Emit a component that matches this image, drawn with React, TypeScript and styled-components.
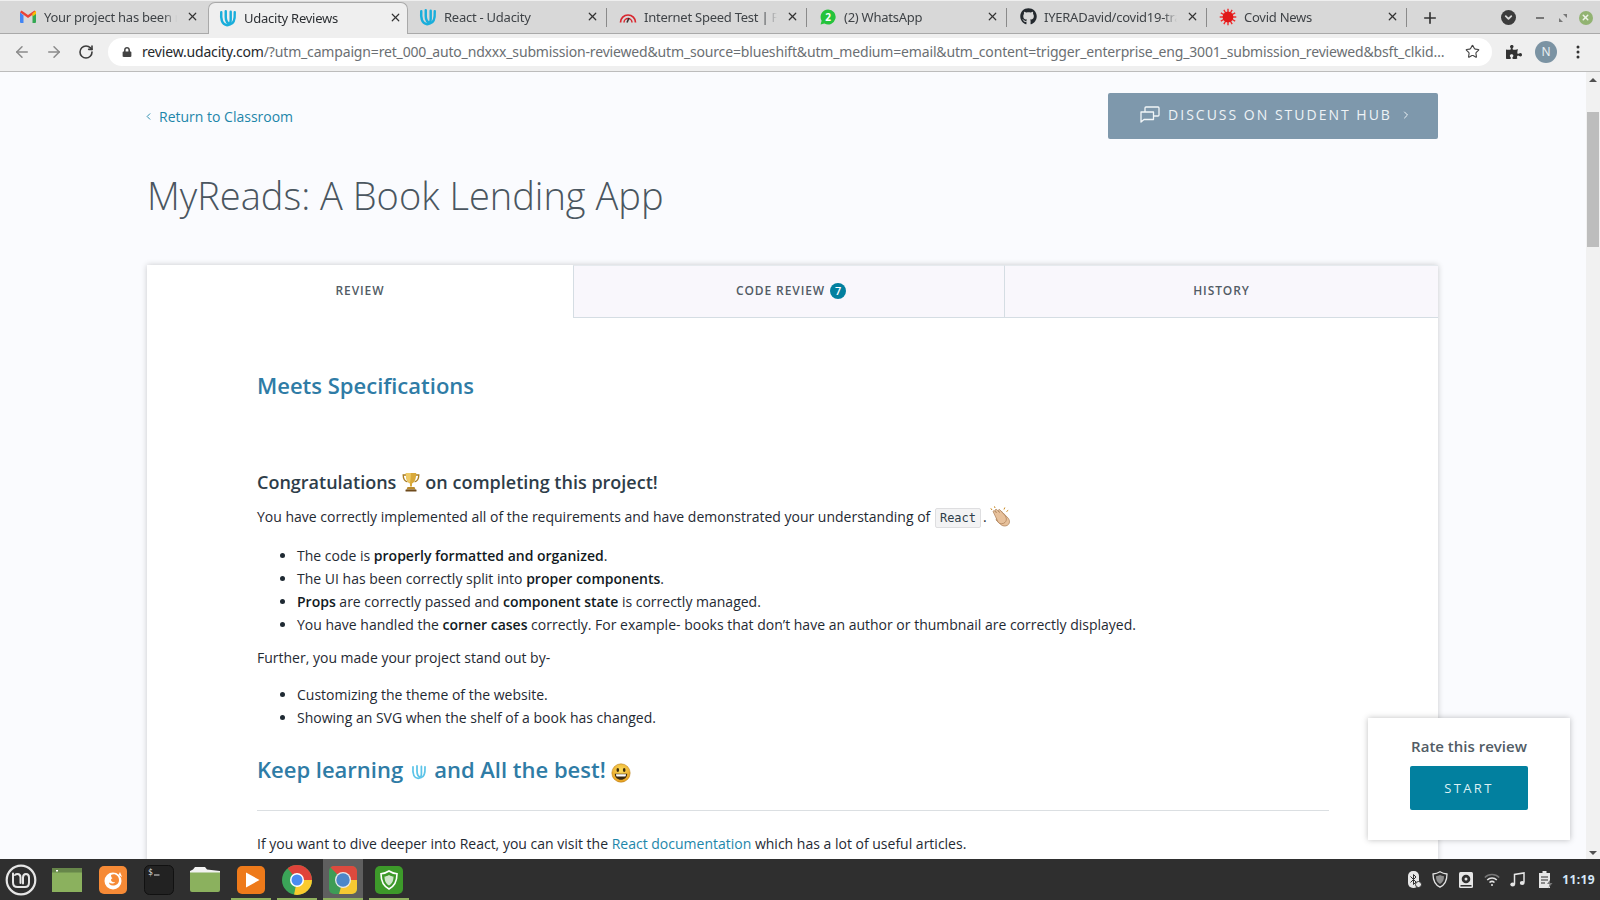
import React from "react";
import styled, { createGlobalStyle } from "styled-components";
import { ArrowLeft, ArrowRight, RotateCw, Star, X, Plus, ChevronLeft, ChevronRight, ChevronDown } from "lucide-react";
import { FaGithub, FaPuzzlePiece, FaLock } from "react-icons/fa";

const Global = createGlobalStyle`
  html, body { margin: 0; padding: 0; height: 100%; overflow: hidden; background: #fafbfe; }
  * { box-sizing: border-box; }
`;

const Screen = styled.div`
  width: 1600px; height: 900px; display: flex; flex-direction: column; overflow: hidden;
  font-family: "Open Sans", "Noto Sans", sans-serif;
`;

/* ---------- browser chrome ---------- */
const TabStrip = styled.div`
  height: 34px; flex: none; background: #d8d8d8; display: flex; align-items: stretch;
  padding: 1px 0 0 8px; border-top: 1px solid #efefef; border-bottom: 1px solid #a9a9a9; position: relative;
`;
const Tab = styled.div<{ $active?: boolean; $sep?: boolean }>`
  width: 196px; margin-right: 4px; display: flex; align-items: center; gap: 7px; padding: 0 4px 2px 11px; position: relative;
  font: 13px "Noto Sans", sans-serif; color: #3f4347; letter-spacing: -0.25px; white-space: nowrap; z-index: 1;
  ${p => p.$active ? `
    background: #efefef; border: 1px solid #a9a9a9; border-bottom: none; border-radius: 7px 7px 0 0;
    width: 200px; margin: 0 0 -1px 0; padding-left: 10px; color: #2c2f33;
  ` : ""}
  ${p => p.$sep ? `&::after { content: ""; position: absolute; right: -3px; top: 6px; bottom: 6px; width: 1px; background: #8a8a8a; }` : ""}
`;
const TabTitle = styled.span`
  flex: 1; overflow: hidden; min-width: 0;
  -webkit-mask-image: linear-gradient(90deg, #000 90%, transparent 100%);
  mask-image: linear-gradient(90deg, #000 90%, transparent 100%);
`;
const TabIcon = styled.span`width: 18px; height: 18px; flex: none; display: flex; align-items: center; justify-content: center;`;
const TabClose = styled.span`width: 16px; height: 16px; flex: none; display: flex; align-items: center; justify-content: center; color: #333;`;
const NewTab = styled.span`width: 32px; margin-left: 6px; display: flex; align-items: center; justify-content: center; color: #333;`;
const WindowControls = styled.div`margin-left: auto; display: flex; align-items: center; padding-right: 3px; gap: 0;`;
const Dropdown = styled.span`
  width: 15px; height: 15px; border-radius: 50%; background: #3c3c3c; color: #d8d8d8; display: flex; align-items: center; justify-content: center; margin-right: 12px;
`;
const WinBtn = styled.span`width: 23px; display: flex; align-items: center; justify-content: center;`;
const CloseCircle = styled.span`
  width: 14px; height: 14px; border-radius: 50%; background: #92b372; color: #eef3e8; display: flex; align-items: center; justify-content: center;
`;

const Toolbar = styled.div`
  height: 38px; flex: none; background: #efefef; border-bottom: 1px solid #bcbcbc; display: flex; align-items: center; padding: 0 0 2px 6px;
`;
const NavBtn = styled.span<{ $dim?: boolean }>`
  width: 32px; display: flex; justify-content: center; color: ${p => p.$dim ? "#8b8b8b" : "#3c3c3c"};
`;
const UrlPill = styled.div`
  margin-left: 6px; width: 1384px; height: 28px; border-radius: 14px; background: #fff; display: flex; align-items: center; padding: 0 12px 0 14px;
  font: 14px "Noto Sans", sans-serif; color: #6b6f73; letter-spacing: -0.165px; white-space: nowrap;
`;
const Host = styled.span`color: #26292c; margin-left: 10px;`;
const UrlRest = styled.span`flex: 1; overflow: hidden; text-overflow: ellipsis; min-width: 0; margin-right: 17px;`;
const ToolIcon = styled.span<{ $w: number }>`
  width: ${p => p.$w}px; display: flex; justify-content: center; align-items: center; color: #333;
`;
const Avatar = styled.span`
  width: 22px; height: 22px; border-radius: 50%; background: #7b93a3; color: #e9eff3; font: 12px "Noto Sans", sans-serif; display: flex; align-items: center; justify-content: center;
`;

/* ---------- page ---------- */
const Viewport = styled.div`flex: 1; min-height: 0; display: flex; background: #fafbfe;`;
const Page = styled.div`flex: 1; min-width: 0; overflow: hidden; position: relative; padding: 21px 148px 0 147px;`;
const Scrollbar = styled.div`
  width: 14px; flex: none; background: #f1f1f1; display: flex; flex-direction: column; align-items: center; justify-content: space-between; padding: 6px 0 4px; position: relative;
`;
const Thumb = styled.div`
  position: absolute; right: 1px; top: 40px; width: 12px; height: 135px; background: #bdbdbd;
`;
const ArrowUp = styled.span`width: 0; height: 0; border-left: 4px solid transparent; border-right: 4px solid transparent; border-bottom: 4px solid #505050;`;
const ArrowDown = styled.span`width: 0; height: 0; border-left: 4px solid transparent; border-right: 4px solid transparent; border-top: 4px solid #505050;`;

const HeaderRow = styled.div`display: flex; justify-content: space-between; align-items: center; height: 46px;`;
const BackLink = styled.a`
  display: flex; align-items: center; gap: 5px; font-size: 14px; color: #1d86aa; margin: 0 0 0 -4px;
`;
const HubButton = styled.div`
  width: 330px; height: 46px; background: #7e98ac; border-radius: 2px; color: #eef3f6; display: flex; align-items: center; justify-content: center; gap: 8px;
  font-size: 14px; letter-spacing: 2px; font-weight: 400; padding: 0 0 3px 6px;
`;
const Title = styled.h1`
  margin: 29px 0 0; font-size: 38px; line-height: 54px; font-weight: 300; color: #4a5660; letter-spacing: 0;
`;
const Card = styled.div`
  margin-top: 43px; background: #fff; box-shadow: 0 0 6px rgba(0,0,0,.2); min-height: 800px;
`;
const TabsRow = styled.div`display: grid; grid-template-columns: 426px 431px 434px; height: 53px;`;
const CardTab = styled.div<{ $active?: boolean; $inset?: number }>`
  display: flex; align-items: center; justify-content: center; gap: 5px;
  font-size: 12px; font-weight: 600; letter-spacing: 0.9px; color: #525c65;
  background: ${p => p.$active ? "#fff" : "#f9f7fc"};
  ${p => p.$active ? "" : `border-bottom: 1px solid #d5dde3; border-left: 1px solid #d5dde3; border-top: 1px solid #e6eaee;`}
  padding: 0 0 2px ${p => p.$inset ?? 0}px;
`;
const Count = styled.span`
  width: 16px; height: 16px; border-radius: 50%; background: #02809f; color: #fff; font-size: 11px; letter-spacing: 0; display: flex; align-items: center; justify-content: center;
`;
const Body = styled.div`padding: 52px 109px 0 110px; color: #2e3d49; font-size: 14px; line-height: 23px;`;
const BlueHead = styled.h2`
  margin: 0; font-size: 22px; line-height: 30px; font-weight: 600; color: #2f7ca6; display: flex; align-items: center; gap: 6px;
`;
const ClosingHead = styled(BlueHead)`margin-top: 25px;`;
const SubHead = styled.h3`
  margin: 67px 0 0; font-size: 18px; line-height: 30px; font-weight: 600; color: #2e3d49; display: flex; align-items: center; gap: 5.5px;
`;
const Para = styled.p<{ $top: number }>`
  margin: ${p => p.$top}px 0 0; font-size: 14px; line-height: 23px; color: #1f2a33; display: flex; align-items: center; white-space: pre;
`;
const List = styled.ul<{ $top: number }>`
  margin: ${p => p.$top}px 0 0; padding: 0 0 0 40px; font-size: 14px; line-height: 23px; color: #1f2a33;
  b { font-weight: 600; color: #111a22; }
`;
const InlineCode = styled.code`
  font: 12px "DejaVu Sans Mono", "Liberation Mono", monospace; color: #2e3d49; background: #f3f3f4; border: 1px solid #dedee0; border-radius: 2px; padding: 0 4px; margin: 2px 2px 0 1px; height: 20px; line-height: 18px;
`;
const Rule = styled.hr`margin: 26px 0 0; border: none; border-top: 1px solid #dbdfe2;`;
const DocLink = styled.a`color: #1d86aa;`;
const EmojiSlot = styled.span`display: inline-flex; margin: 7px 0 0 -1px;`;
const LogoSlot = styled.span`display: inline-flex; margin: 5px 1px 0 2px;`;

const RateCard = styled.div`
  position: absolute; left: 1368px; top: 646px; width: 202px; height: 122px; background: #fff; box-shadow: 0 0 6px rgba(0,0,0,.25);
  display: flex; flex-direction: column; align-items: center; padding-top: 17px;
`;
const RateText = styled.div`font-size: 15px; font-weight: 600; color: #525c65; line-height: 22px; letter-spacing: 0;`;
const StartBtn = styled.div`
  margin-top: 9px; width: 118px; height: 44px; background: #02809f; border-radius: 2px; color: #dff0f4; font-size: 13px; letter-spacing: 2.4px; display: flex; align-items: center; justify-content: center;
`;

/* ---------- taskbar ---------- */
const Taskbar = styled.div`
  height: 41px; flex: none; background: #2f2f2f; display: flex; align-items: center; gap: 6px; padding-left: 1px; position: relative; z-index: 2;
`;
const Launcher = styled.span<{ $active?: boolean; $run?: boolean }>`
  width: 40px; height: 41px; display: flex; align-items: center; justify-content: center; position: relative;
  background: ${p => p.$active ? "#5f5f5f" : "transparent"};
  ${p => p.$run ? `&::after { content: ""; position: absolute; left: 0; right: 0; bottom: 0; height: 2px; background: #8fb15e; }` : ""}
`;
const Tray = styled.div`margin-left: auto; display: flex; align-items: center; gap: 7px; padding-right: 5px;`;
const TrayIcon = styled.span<{ $w?: number; $lead?: number }>`
  width: ${p => p.$w ?? 19}px; margin-left: ${p => p.$lead ?? 0}px; display: flex; justify-content: center;
`;
const Clock = styled.span`
  font: 700 12px "Noto Sans", sans-serif; color: #d6e8f8; letter-spacing: 0.4px; margin-left: -1px;
`;

/* ---------- drawings ---------- */
const Udacity = ({ size = 18, color = "#1aaedb", weight = 2.7 }: { size?: number; color?: string; weight?: number }) => (
  <svg width={size} height={size} viewBox="0 0 20 20" fill="none" stroke={color} strokeWidth={weight} strokeLinecap="round">
    <path d="M2.5 3.5 C2 10 2.5 17.5 9 18 C11 18 13 16.5 13 12 V3" />
    <path d="M7.5 2.5 V9 C7.5 13 9 16 12.5 17 C16.5 16.5 17.8 11 17.5 3.5" />
  </svg>
);
const Gmail = () => (
  <svg width="16" height="13" viewBox="0 0 16 13">
    <path d="M0 2v10a1 1 0 0 0 1 1h2.5V5.500z" fill="#4285f4" />
    <path d="M16 2v10a1 1 0 0 1-1 1h-2.500V5.500z" fill="#34a853" />
    <path d="M0 2.200 8 8l8-5.800-1.500-1.800L8 5 1.500.4z" fill="#ea4335" />
    <path d="M12.500 3.200 16 .8V4l-3.500 2.500z" fill="#fbbc04" />
  </svg>
);
const Speed = () => (
  <svg width="18" height="14" viewBox="0 0 18 14" fill="none" stroke="#d9262e" strokeWidth="1.7">
    <path d="M1.500 12.500a7.500 7.500 0 0 1 15 0" />
    <path d="M5 12.500a4 4 0 0 1 8 0" strokeWidth="1.500" />
    <path d="M8 12.500 10 8" stroke="#333" strokeWidth="1.600" />
  </svg>
);
const Whats = () => (
  <svg width="16" height="16" viewBox="0 0 16 16">
    <path d="M8 .5a7.500 7.500 0 1 1-3.600 14L.6 15.500l1-3.700A7.500 7.500 0 0 1 8 .5z" fill="#25c33c" />
    <text x="8" y="11.500" textAnchor="middle" fontSize="10" fontWeight="700" fontFamily="Noto Sans, sans-serif" fill="#fff">2</text>
  </svg>
);
const Virus = () => (
  <svg width="20" height="20" viewBox="0 0 20 20">
    <g stroke="#ef2d2d" strokeWidth="1.600">
      {[0, 30, 60, 90, 120, 150, 180, 210, 240, 270, 300, 330].map(a => (
        <line key={a} x1="10" y1="10" x2="10" y2="0.8" transform={`rotate(${a} 10 10)`} />
      ))}
    </g>
    <circle cx="10" cy="10" r="6" fill="#e01818" />
  </svg>
);
const Trophy = () => (
  <svg width="18" height="20" viewBox="0 0 18 20">
    <path d="M4 3H1.200c0 4 1.200 6 4.200 6.800M14 3h2.800c0 4-1.200 6-4.200 6.800" fill="none" stroke="#a87c22" strokeWidth="1.300" />
    <path d="M3.800 1h10.400c0 6-1.600 9.400-4.200 10.400v3H8v-3C5.400 10.400 3.800 7 3.800 1z" fill="#d9a93a" />
    <path d="M3.800 1h5c0 5-.5 8-.8 10C5.400 10 3.800 7 3.800 1z" fill="#efcb67" />
    <path d="M5.500 15h7l1 2.600h-9z" fill="#b98a2c" />
    <rect x="3.500" y="17.400" width="11" height="2" rx=".5" fill="#6e4a1c" />
  </svg>
);
const Clap = () => (
  <svg width="21" height="21" viewBox="0 0 21 21">
    <g fill="#e7c19c" stroke="#a97c55" strokeWidth=".7" strokeLinejoin="round">
      <path d="M9 5.500c1.500-1 3 .2 4.200 1.500l5 5.200c2 2.500 1.600 5.500-.6 7-2.200 1.400-5 1-7-.8L6 14z" />
      <path d="M3.300 6c-.6-.9.6-1.900 1.400-1.100l1.700 1.900L5.300 4.700c-.6-.9.6-1.900 1.400-1.200l2.800 3-1-1.700c-.5-.9.7-1.800 1.400-1l4.700 5.200c2.200 2.500 2.300 5.500.4 7.400-1.900 1.800-4.800 1.800-6.800 0z" />
    </g>
    <path d="M2 4 .8 2.300M5 2 4.500.4M14 3.500l.8-2M16.500 5.500l1.700-1.200" stroke="#c9891f" strokeWidth="1" />
  </svg>
);
const Smile = () => (
  <svg width="20" height="20" viewBox="0 0 20 20">
    <defs>
      <radialGradient id="sm" cx=".5" cy=".35" r=".7"><stop offset="0" stopColor="#fbdc5e" /><stop offset="1" stopColor="#e59a1c" /></radialGradient>
    </defs>
    <circle cx="10" cy="10" r="9.200" fill="url(#sm)" stroke="#b57a14" strokeWidth=".5" />
    <ellipse cx="6.800" cy="7" rx="1.300" ry="2" fill="#3a2a10" />
    <ellipse cx="13.200" cy="7" rx="1.300" ry="2" fill="#3a2a10" />
    <path d="M3.800 10.800h12.400c0 3.800-2.800 6-6.200 6s-6.200-2.200-6.200-6z" fill="#3a2a10" />
    <path d="M5 11.300h10c0 1.200-.3 1.800-.6 2.200H5.600c-.3-.4-.6-1-.6-2.200z" fill="#fff" />
  </svg>
);
const Hub = () => (
  <svg width="20" height="17" viewBox="0 0 20 17" fill="none" stroke="#f2f6f8" strokeWidth="1.300" strokeLinejoin="round">
    <path d="M1 6h12.500v7.500H4L1 16z" />
    <path d="M5 6V2c0-.6.4-1 1-1h12c.6 0 1 .4 1 1v7c0 .6-.4 1-1 1h-4.500" />
  </svg>
);
const Mint = () => (
  <svg width="32" height="32" viewBox="0 0 32 32" fill="none" stroke="#e6e6e6">
    <circle cx="16" cy="16" r="14.300" strokeWidth="2.200" />
    <path d="M8 9.500v9c0 3 2 4.500 4.500 4.500h7.500c2.500 0 4-1.800 4-4.500v-5c0-2-1.300-3.500-3-3.500s-3 1.500-3 3.500v6M15.500 19v-5.500c0-2-1.300-3.500-3-3.500s-2.500 1-2.500 1" strokeWidth="2" strokeLinecap="round" />
  </svg>
);
const GreenWindow = () => (
  <svg width="30" height="24" viewBox="0 0 30 24">
    <rect width="30" height="24" fill="#8bb15e" />
    <rect width="30" height="4.500" fill="#67864a" />
    <rect x="4" y="2" width="2" height="1.500" fill="#fff" />
  </svg>
);
const FirefoxIcon = () => (
  <svg width="28" height="28" viewBox="0 0 28 28">
    <rect width="28" height="28" rx="5" fill="#f68a36" />
    <circle cx="14" cy="15" r="8.500" fill="#fff" />
    <path d="M12 9c4-2 8 1 8 5s-3 5.500-6 5.500-4-1.500-4-3c2 1.500 5 1.500 6-.5-2 .5-4-.5-4-2 0-1 1-1.500 1.500-2C12.500 12 12 10.500 12 9z" fill="#f68a36" />
    <path d="M21 6l2 5-3.500-2z" fill="#fff" />
  </svg>
);
const Terminal = () => (
  <svg width="30" height="30" viewBox="0 0 30 30">
    <rect x=".5" y=".5" width="29" height="29" rx="5" fill="#222" stroke="#111" />
    <text x="4" y="10" fontSize="8" fontFamily="DejaVu Sans Mono, monospace" fill="#ddd">$</text>
    <rect x="10" y="9.500" width="5.500" height="1" fill="#ddd" />
  </svg>
);
const Folder = () => (
  <svg width="30" height="25" viewBox="0 0 30 25">
    <path d="M0 4h30v19a2 2 0 0 1-2 2H2a2 2 0 0 1-2-2z" fill="#8bb15e" />
    <path d="M3 2.500 5 0h10l2 2.500 13 1.500v1.500H0V4z" fill="#f2f2f2" />
  </svg>
);
const PlayIcon = () => (
  <svg width="28" height="28" viewBox="0 0 28 28">
    <rect width="28" height="28" rx="5" fill="#ee7a1a" />
    <path d="M9 6.500 22.500 14 9 21.500z" fill="#fff" />
  </svg>
);
const ChromeBall = ({ id }: { id: string }) => (
  <svg width="30" height="30" viewBox="0 0 30 30">
    <defs><clipPath id={id}><circle cx="15" cy="15" r="15" /></clipPath></defs>
    <g clipPath={`url(#${id})`}>
      <rect width="30" height="30" fill="#3ba458" />
      <path d="M15 15 3 0h27v15z" fill="#e0433a" />
      <path d="M15 15h15v15H12z" fill="#fbcb2e" />
    </g>
    <circle cx="15" cy="15" r="7" fill="#fff" />
    <circle cx="15" cy="15" r="5.500" fill="#4a8cf0" />
  </svg>
);
const ChromeSquare = () => (
  <svg width="28" height="28" viewBox="0 0 28 28">
    <defs><clipPath id="cs"><rect width="28" height="28" rx="5" /></clipPath></defs>
    <g clipPath="url(#cs)">
      <rect width="28" height="28" fill="#3e9c56" />
      <path d="M14 14 0 0h28v14z" fill="#dd4a3e" />
      <path d="M14 14h14v14H10z" fill="#f6c832" />
    </g>
    <circle cx="14" cy="14" r="8" fill="#e9e9e9" />
    <circle cx="14" cy="14" r="6.700" fill="#4b87c9" />
  </svg>
);
const ShieldApp = () => (
  <svg width="28" height="28" viewBox="0 0 28 28" fill="none">
    <rect width="28" height="28" rx="5" fill="#3d9a2a" />
    <path d="M14 5c3 2 5.500 2.600 8 2.800 0 7-1.500 12-8 15.200C7.500 19.800 6 14.800 6 7.800 8.500 7.600 11 7 14 5z" stroke="#fff" strokeWidth="1.600" />
    <path d="M14 9c1.800 1 3 1.400 4.500 1.600 0 4-1 7-4.500 9-3.500-2-4.500-5-4.500-9C11 10.400 12.200 10 14 9z" fill="#fff" opacity=".75" />
  </svg>
);
const TrayBt = () => (
  <svg width="14" height="17" viewBox="0 0 14 17">
    <rect x="0" y="0" width="11" height="17" rx="5" fill="#e6e6e6" />
    <path d="M2.500 5.500l5.500 5.500-2.500 2.500V3.500L8 6 2.500 11.500" stroke="#2f2f2f" strokeWidth="1" fill="none" />
    <circle cx="10.500" cy="13.500" r="3" fill="#e6e6e6" stroke="#2f2f2f" />
  </svg>
);
const TrayShield = () => (
  <svg width="16" height="17" viewBox="0 0 16 17" fill="none">
    <path d="M8 .8c2.200 1.400 4.400 2 7 2.200 0 6-1.500 10.500-7 13.200C2.500 13.500 1 9 1 3c2.600-.2 4.800-.8 7-2.200z" stroke="#e4e4e4" strokeWidth="1.300" />
    <path d="M8 4c1.300.8 2.500 1.100 4 1.300 0 3.400-.8 6-4 7.700-3.200-1.700-4-4.300-4-7.700C5.500 5.100 6.700 4.800 8 4z" fill="#8e8e8e" />
  </svg>
);
const TrayDisk = () => (
  <svg width="14" height="16" viewBox="0 0 14 16">
    <rect width="14" height="16" rx="1.500" fill="#e6e6e6" />
    <circle cx="7" cy="7" r="4.300" fill="#2f2f2f" />
    <circle cx="7" cy="7" r="1.500" fill="#e6e6e6" />
    <rect x="1.500" y="13" width="11" height="1.500" fill="#2f2f2f" />
  </svg>
);
const TrayWifi = () => (
  <svg width="16" height="14" viewBox="0 0 16 14" fill="none" stroke="#e4e4e4" strokeWidth="1.500">
    <path d="M.8 4.500c4-4 10.400-4 14.400 0" stroke="#777" />
    <path d="M3.200 7c2.700-2.600 7-2.600 9.600 0" />
    <path d="M5.500 9.500c1.400-1.300 3.600-1.300 5 0" />
    <circle cx="8" cy="12" r="1" fill="#e4e4e4" stroke="none" />
  </svg>
);
const TrayMusic = () => (
  <svg width="15" height="15" viewBox="0 0 15 15">
    <path d="M4.500 12V2.500L14 1v9.500" stroke="#e6e6e6" strokeWidth="1.500" fill="none" />
    <ellipse cx="2.700" cy="12.500" rx="2.400" ry="2" fill="#e6e6e6" />
    <ellipse cx="12.200" cy="11" rx="2.400" ry="2" fill="#e6e6e6" />
  </svg>
);
const TrayBatt = () => (
  <svg width="15" height="17" viewBox="0 0 15 17">
    <path d="M0 2h3.500V0h4v2H11v15H0z" fill="#e6e6e6" />
    <path d="M2 6h7M2 9h7M2 12h4" stroke="#2f2f2f" strokeWidth="1.200" />
    <path d="M11 9 8 13h2.500l-1 4 4-5H11z" fill="#777" />
  </svg>
);

const tabs: { title: string; icon: React.ReactNode; active?: boolean; sep?: boolean }[] = [
  { title: "Your project has been reviewed", icon: <Gmail /> },
  { title: "Udacity Reviews", icon: <Udacity />, active: true },
  { title: "React - Udacity", icon: <Udacity />, sep: true },
  { title: "Internet Speed Test | Fast.com", icon: <Speed />, sep: true },
  { title: "(2) WhatsApp", icon: <Whats />, sep: true },
  { title: "IYERADavid/covid19-tracker", icon: <FaGithub size={17} color="#24292e" />, sep: true },
  { title: "Covid News", icon: <Virus />, sep: true },
];

export default function App() {
  return (
    <Screen>
      <Global />
      <TabStrip>
        {tabs.map(t => (
          <Tab key={t.title} $active={t.active} $sep={t.sep}>
            <TabIcon>{t.icon}</TabIcon>
            <TabTitle>{t.title}</TabTitle>
            <TabClose><X size={13} strokeWidth={2.2} /></TabClose>
          </Tab>
        ))}
        <NewTab><Plus size={18} strokeWidth={2.2} /></NewTab>
        <WindowControls>
          <Dropdown><ChevronDown size={11} strokeWidth={4} /></Dropdown>
          <WinBtn><svg width="8" height="2"><rect width="8" height="2" fill="#777" /></svg></WinBtn>
          <WinBtn><svg width="8" height="8"><path d="M4 0h4v4zM0 4l4 4H0z" fill="#777" /></svg></WinBtn>
          <WinBtn><CloseCircle><X size={9} strokeWidth={4} /></CloseCircle></WinBtn>
        </WindowControls>
      </TabStrip>
      <Toolbar>
        <NavBtn $dim><ArrowLeft size={18} /></NavBtn>
        <NavBtn $dim><ArrowRight size={18} /></NavBtn>
        <NavBtn><RotateCw size={16} strokeWidth={2.4} /></NavBtn>
        <UrlPill>
          <FaLock size={10} color="#444" />
          <Host>review.udacity.com</Host>
          <UrlRest>/?utm_campaign=ret_000_auto_ndxxx_submission-reviewed&amp;utm_source=blueshift&amp;utm_medium=email&amp;utm_content=trigger_enterprise_eng_3001_submission_reviewed&amp;bsft_clkid=8a2c6f1e3b7d4a90</UrlRest>
          <Star size={15} strokeWidth={1.8} color="#444" />
        </UrlPill>
        <ToolIcon $w={43}><FaPuzzlePiece size={16} /></ToolIcon>
        <ToolIcon $w={22}><Avatar>N</Avatar></ToolIcon>
        <ToolIcon $w={42}><svg width="4" height="14"><circle cx="2" cy="2" r="1.500" fill="#333" /><circle cx="2" cy="7" r="1.500" fill="#333" /><circle cx="2" cy="12" r="1.500" fill="#333" /></svg></ToolIcon>
      </Toolbar>
      <Viewport>
        <Page>
          <HeaderRow>
            <BackLink><ChevronLeft size={11} strokeWidth={2} />Return to Classroom</BackLink>
            <HubButton><Hub />DISCUSS ON STUDENT HUB<ChevronRight size={12} /></HubButton>
          </HeaderRow>
          <Title>MyReads: A Book Lending App</Title>
          <Card>
            <TabsRow>
              <CardTab $active>REVIEW</CardTab>
              <CardTab $inset={4}>CODE REVIEW<Count>7</Count></CardTab>
              <CardTab>HISTORY</CardTab>
            </TabsRow>
            <Body>
              <BlueHead>Meets Specifications</BlueHead>
              <SubHead>Congratulations <Trophy /> on completing this project!</SubHead>
              <Para $top={8}>You have correctly implemented all of the requirements and have demonstrated your understanding of <InlineCode>React</InlineCode>. <Clap /></Para>
              <List $top={16}>
                <li>The code is <b>properly formatted and organized</b>.</li>
                <li>The UI has been correctly split into <b>proper components</b>.</li>
                <li><b>Props</b> are correctly passed and <b>component state</b> is correctly managed.</li>
                <li>You have handled the <b>corner cases</b> correctly. For example- books that don’t have an author or thumbnail are correctly displayed.</li>
              </List>
              <Para $top={10}>Further, you made your project stand out by-</Para>
              <List $top={14}>
                <li>Customizing the theme of the website.</li>
                <li>Showing an SVG when the shelf of a book has changed.</li>
              </List>
              <ClosingHead>Keep learning <LogoSlot><Udacity size={16} color="#5cc4e8" weight={2.2} /></LogoSlot> and All the best! <EmojiSlot><Smile /></EmojiSlot></ClosingHead>
              <Rule />
              <Para $top={21}>If you want to dive deeper into React, you can visit the <DocLink>React documentation</DocLink> which has a lot of useful articles.</Para>
            </Body>
          </Card>
          <RateCard>
            <RateText>Rate this review</RateText>
            <StartBtn>START</StartBtn>
          </RateCard>
        </Page>
        <Scrollbar>
          <Thumb />
          <ArrowUp />
          <ArrowDown />
        </Scrollbar>
      </Viewport>
      <Taskbar>
        <Launcher><Mint /></Launcher>
        <Launcher><GreenWindow /></Launcher>
        <Launcher><FirefoxIcon /></Launcher>
        <Launcher><Terminal /></Launcher>
        <Launcher><Folder /></Launcher>
        <Launcher $run><PlayIcon /></Launcher>
        <Launcher $run><ChromeBall id="cb" /></Launcher>
        <Launcher $active $run><ChromeSquare /></Launcher>
        <Launcher $run><ShieldApp /></Launcher>
        <Tray>
          <TrayIcon $w={17}><TrayBt /></TrayIcon>
          <TrayIcon><TrayShield /></TrayIcon>
          <TrayIcon><TrayDisk /></TrayIcon>
          <TrayIcon><TrayWifi /></TrayIcon>
          <TrayIcon><TrayMusic /></TrayIcon>
          <TrayIcon $lead={3}><TrayBatt /></TrayIcon>
          <Clock>11:19</Clock>
        </Tray>
      </Taskbar>
    </Screen>
  );
}
